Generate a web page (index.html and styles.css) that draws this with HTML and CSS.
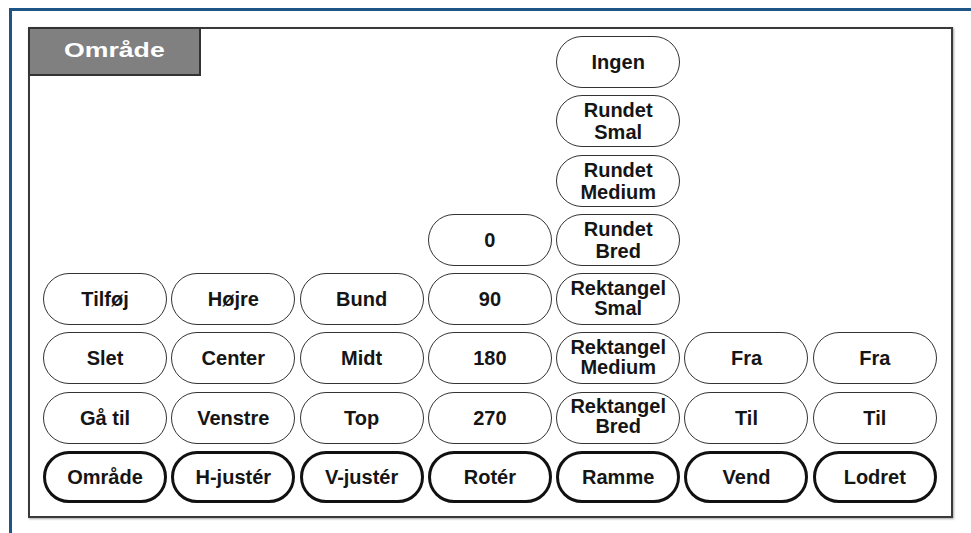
FILE: index.html
```html
<!DOCTYPE html>
<html>
  <head>
    <link rel="stylesheet" href="styles.css">
  </head>

  <body>
    <div class="screen">
      <div class="panel">
        <div class="tab"><span>Område</span></div>

        <div class="column">
          <div class="key">Tilføj</div>
          <div class="key">Slet</div>
          <div class="key">Gå til</div>
          <div class="key main">Område</div>
        </div>

        <div class="column">
          <div class="key">Højre</div>
          <div class="key">Center</div>
          <div class="key">Venstre</div>
          <div class="key main">H-justér</div>
        </div>

        <div class="column">
          <div class="key">Bund</div>
          <div class="key">Midt</div>
          <div class="key">Top</div>
          <div class="key main">V-justér</div>
        </div>

        <div class="column">
          <div class="key">0</div>
          <div class="key">90</div>
          <div class="key">180</div>
          <div class="key">270</div>
          <div class="key main">Rotér</div>
        </div>

        <div class="column">
          <div class="key">Ingen</div>
          <div class="key two">Rundet<br>Smal</div>
          <div class="key two">Rundet<br>Medium</div>
          <div class="key two">Rundet<br>Bred</div>
          <div class="key two tight">Rektangel<br>Smal</div>
          <div class="key two tight">Rektangel<br>Medium</div>
          <div class="key two tight">Rektangel<br>Bred</div>
          <div class="key main">Ramme</div>
        </div>

        <div class="column">
          <div class="key">Fra</div>
          <div class="key">Til</div>
          <div class="key main">Vend</div>
        </div>

        <div class="column">
          <div class="key">Fra</div>
          <div class="key">Til</div>
          <div class="key main">Lodret</div>
        </div>
      </div>
    </div>
  </body>
</html>
```

FILE: styles.css
```css
html,
body {
  margin: 0;
  height: 100%;
  background-color: #fff;
  font-family: "Liberation Sans", Arial, sans-serif;
  overflow: hidden;
}

.screen {
  box-sizing: border-box;
  width: 962px;
  height: 525px;
  margin: 8px 0 0 9px;
  padding: 16px 0 0 16px;
  border-top: 3px solid #1d5686;
  border-left: 3px solid #1d5686;
}

.panel {
  position: relative;
  box-sizing: border-box;
  width: 925px;
  height: 491px;
  padding: 7px 0 13px 13px;
  border: 2px solid #3a3a3a;
  box-shadow: 1px 1px 2px rgba(0, 0, 0, 0.35);
  display: grid;
  grid-template-columns: repeat(7, 124px);
  column-gap: 4.3px;
}

.tab {
  position: absolute;
  top: -2px;
  left: -2px;
  box-sizing: border-box;
  width: 173px;
  height: 49px;
  padding: 9px 0 0 34px;
  background-color: #808080;
  border: 2px solid #333;
  color: #fff;
  font-size: 20.5px;
  font-weight: bold;
  line-height: 24px;
}

.tab span {
  display: inline-block;
  transform: scaleX(1.3);
  transform-origin: left center;
}

.column {
  display: flex;
  flex-direction: column;
  justify-content: flex-end;
  gap: 7.3px;
}

.key {
  box-sizing: border-box;
  height: 52px;
  border: 1.5px solid #333;
  border-radius: 26px;
  display: flex;
  align-items: center;
  justify-content: center;
  text-align: center;
  color: #151515;
  font-size: 20px;
  font-weight: bold;
  line-height: 22px;
  white-space: nowrap;
}

.key.two {
  line-height: 22px;
}

.key.tight {
  line-height: 20px;
  padding-bottom: 3px;
}

.key.main {
  border: 3px solid #111;
}
```
